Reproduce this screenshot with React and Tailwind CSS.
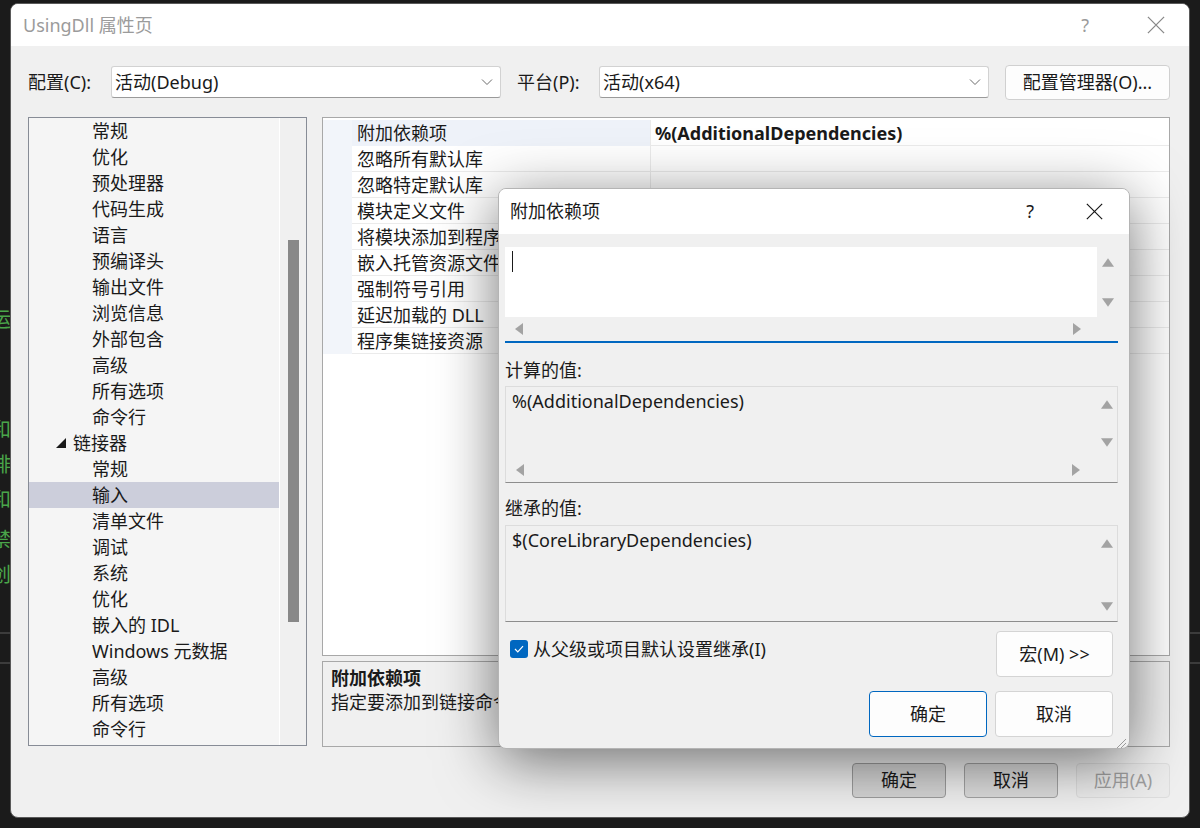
import React from "react";

// tree on the left side of the property page
const TREE = [
  { label: "常规" },
  { label: "优化" },
  { label: "预处理器" },
  { label: "代码生成" },
  { label: "语言" },
  { label: "预编译头" },
  { label: "输出文件" },
  { label: "浏览信息" },
  { label: "外部包含" },
  { label: "高级" },
  { label: "所有选项" },
  { label: "命令行" },
  { label: "链接器", group: true },
  { label: "常规" },
  { label: "输入", selected: true },
  { label: "清单文件" },
  { label: "调试" },
  { label: "系统" },
  { label: "优化" },
  { label: "嵌入的 IDL" },
  { label: "Windows 元数据" },
  { label: "高级" },
  { label: "所有选项" },
  { label: "命令行" },
];

const PROPS = [
  "附加依赖项",
  "忽略所有默认库",
  "忽略特定默认库",
  "模块定义文件",
  "将模块添加到程序集",
  "嵌入托管资源文件",
  "强制符号引用",
  "延迟加载的 DLL",
  "程序集链接资源",
];

// bits of the code editor peeking out behind the window
const BACKDROP = [
  { ch: "“", top: 266 },
  { ch: "运", top: 308 },
  { ch: "和", top: 418 },
  { ch: "排", top: 453 },
  { ch: "和", top: 488 },
  { ch: "禁", top: 528 },
  { ch: "创", top: 563 },
  { ch: "/", top: 603 },
];

const Arrow = ({ dir }) => {
  const pts = {
    up: "0,8 5.5,0 11,8",
    down: "0,0 11,0 5.5,8",
    left: "8,0 8,12 0,6",
    right: "0,0 0,12 8,6",
  }[dir];
  const vertical = dir === "up" || dir === "down";
  return (
    <svg
      width={vertical ? 12 : 8}
      height={vertical ? 9 : 12}
      viewBox={vertical ? "0 0 11 8" : "0 0 8 12"}
    >
      <polygon points={pts} fill="#a3a3a3" />
    </svg>
  );
};

const Chevron = () => (
  <svg width="12" height="8" viewBox="0 0 12 8">
    <path d="M1 1.5 L6 6.5 L11 1.5" fill="none" stroke="#6b6b6b" strokeWidth="1" />
  </svg>
);

const Combo = ({ value, width }) => (
  <div
    className={`h-[32px] ${width} bg-white border border-[#d2d2d2] border-b-[#9a9a9a] rounded-[3px] flex items-center justify-between pl-[3px] pr-[7px]`}
  >
    <span className="text-[18px] leading-[26px] text-[#1a1a1a]">{value}</span>
    <Chevron />
  </div>
);

const CloseIcon = ({ color, size }) => (
  <svg width={size} height={size} viewBox="0 0 20 20">
    <path d="M1 1 L19 19 M19 1 L1 19" stroke={color} strokeWidth="1.4" />
  </svg>
);

const ValueBox = ({ text, bg, hscroll, height, arrowsPad }) => (
  <div className={`flex flex-col border border-[#dcdcdc] border-b-[#8d8d8d] ${bg}`}>
    <div className={`flex ${height}`}>
      <div className="flex-1 pl-[6px] pt-[1px] text-[18px] leading-[26px] text-[#1a1a1a]">
        {text}
      </div>
      <div
        className={`w-[21px] bg-[#f0f0f0] flex flex-col items-center justify-between ${arrowsPad}`}
      >
        <Arrow dir="up" />
        <Arrow dir="down" />
      </div>
    </div>
    {hscroll && (
      <div className="h-[24px] flex bg-[#f0f0f0]">
        <div className="flex-1 flex items-center justify-between pl-[10px] pr-[16px]">
          <Arrow dir="left" />
          <Arrow dir="right" />
        </div>
        <div className="w-[21px]" />
      </div>
    )}
  </div>
);

const App = () => {
  return (
    <div className="relative w-[1200px] h-[828px] bg-[#1b1b1b] overflow-hidden font-['Noto_Sans','Noto_Sans_CJK_SC',sans-serif]">
      {/* editor behind */}
      {BACKDROP.map((b, i) => (
        <div
          key={i}
          className="absolute left-[-9px] text-[20px] leading-[24px] text-[#4aa64a]"
          style={{ top: b.top }}
        >
          {b.ch}
        </div>
      ))}
      <div className="absolute left-0 top-[632px] w-[12px] h-[2px] bg-[#3c3c3c]" />
      <div className="absolute left-0 top-[662px] w-[12px] h-[2px] bg-[#3c3c3c]" />
      <div className="absolute right-0 top-[632px] w-[12px] h-[2px] bg-[#3c3c3c]" />
      <div className="absolute right-0 top-[662px] w-[12px] h-[2px] bg-[#3c3c3c]" />

      {/* property page window */}
      <div className="absolute left-[10px] top-[3px] w-[1180px] h-[815px] rounded-[8px] bg-[#f0f0f0] border border-[#5a5a5a] flex flex-col overflow-hidden">
        <div className="h-[42px] shrink-0 bg-white flex items-center justify-between pl-[12px] pr-[24px]">
          <span className="text-[18px] text-[#9b9b9b]">UsingDll 属性页</span>
          <div className="flex items-center gap-[58px]">
            <span className="text-[18px] text-[#9b9b9b]">?</span>
            <CloseIcon color="#8a8a8a" size={18} />
          </div>
        </div>

        <div className="flex-1 flex flex-col pl-[17px] pr-[19px]">
          {/* configuration row */}
          <div className="flex items-center mt-[18px] h-[36px]">
            <span className="w-[83px] text-[18px] text-[#1a1a1a]">配置(C):</span>
            <Combo value="活动(Debug)" width="w-[390px]" />
            <span className="w-[82px] ml-[16px] text-[18px] text-[#1a1a1a]">平台(P):</span>
            <Combo value="活动(x64)" width="w-[390px]" />
            <div className="ml-[16px] w-[165px] h-[35px] bg-[#fdfdfd] border border-[#d0d0d0] rounded-[4px] flex items-center justify-center text-[18px] text-[#1a1a1a]">
              配置管理器(O)...
            </div>
          </div>

          <div className="flex mt-[17px] gap-[15px]">
            {/* tree */}
            <div className="w-[279px] h-[629px] border border-[#878c96] bg-[#f5f5f5] flex">
              <div className="flex-1 flex flex-col border-r border-white">
                {TREE.map((t, i) => (
                  <div
                    key={i}
                    className={`h-[26px] shrink-0 flex items-center text-[18px] leading-[26px] text-[#1a1a1a] ${
                      t.selected ? "bg-[#cccedb]" : ""
                    } ${t.group ? "pl-[27px]" : "pl-[63px]"}`}
                  >
                    {t.group && (
                      <svg width="10" height="10" viewBox="0 0 10 10" className="mr-[7px]">
                        <polygon points="10,0 10,10 0,10" fill="#1a1a1a" />
                      </svg>
                    )}
                    {t.label}
                  </div>
                ))}
              </div>
              <div className="w-[26px] bg-[#f0f0f0] flex justify-center">
                <div className="w-[11px] h-[382px] mt-[122px] bg-[#888888]" />
              </div>
            </div>

            {/* property grid + description */}
            <div className="flex-1 flex flex-col gap-[5px]">
              <div className="h-[539px] border border-[#a8a8a8] bg-white pt-[2px]">
                {PROPS.map((p, i) => (
                  <div key={i} className="h-[26px] flex">
                    <div className="w-[29px] bg-[#f2f5fa]" />
                    <div
                      className={`w-[298px] pl-[5px] flex items-center text-[18px] leading-[26px] text-[#1a1a1a] border-b ${
                        i === 0 ? "bg-[#eef2f9] border-[#eef2f9]" : "border-[#ebebeb]"
                      }`}
                    >
                      {p}
                    </div>
                    <div className="flex-1 pl-[4px] flex items-center border-l border-b border-[#ebebeb] text-[18px] leading-[26px] text-[#1a1a1a] font-bold">
                      {i === 0 ? "%(AdditionalDependencies)" : ""}
                    </div>
                  </div>
                ))}
              </div>
              <div className="h-[86px] border border-[#a8a8a8] bg-[#f0f0f0] pl-[8px] pt-[4px]">
                <div className="text-[18px] leading-[24px] font-bold text-[#1a1a1a]">附加依赖项</div>
                <div className="text-[18px] leading-[24px] text-[#1a1a1a]">
                  指定要添加到链接命令行的附加项。[例如 kernel32.lib]
                </div>
              </div>
            </div>
          </div>

          {/* bottom buttons */}
          <div className="flex justify-end gap-[18px] mt-[16px]">
            <div className="w-[94px] h-[35px] rounded-[4px] border border-[#9d9d9d] bg-[#d6d6d6] flex items-center justify-center text-[18px] text-[#1a1a1a]">
              确定
            </div>
            <div className="w-[94px] h-[35px] rounded-[4px] border border-[#a3a3a3] bg-[#dcdcdc] flex items-center justify-center text-[18px] text-[#1a1a1a]">
              取消
            </div>
            <div className="w-[94px] h-[35px] rounded-[4px] border border-[#dedede] bg-[#ececec] flex items-center justify-center text-[18px] text-[#a0a0a0]">
              应用(A)
            </div>
          </div>
        </div>

        {/* modal: 附加依赖项 */}
        <div className="absolute left-[487px] top-[184px] w-[632px] h-[561px] rounded-[8px] bg-[#f0f0f0] border border-[#b4b4b4] shadow-[0_12px_60px_rgba(0,0,0,0.55)] flex flex-col overflow-hidden">
          <div className="h-[45px] shrink-0 bg-white flex items-center justify-between pl-[11px] pr-[26px]">
            <span className="text-[18px] text-[#1a1a1a]">附加依赖项</span>
            <div className="flex items-center gap-[52px]">
              <span className="text-[18px] text-[#1a1a1a]">?</span>
              <CloseIcon color="#1a1a1a" size={17} />
            </div>
          </div>

          <div className="flex-1 flex flex-col pl-[6px] pr-[11px] pt-[13px]">
            {/* edit box */}
            <div className="flex flex-col border-b-2 border-[#0067c0]">
              <div className="flex h-[70px]">
                <div className="flex-1 bg-white pl-[7px] pt-[4px]">
                  <div className="w-[1px] h-[21px] bg-[#1a1a1a]" />
                </div>
                <div className="w-[21px] bg-[#f0f0f0] flex flex-col items-center justify-between pt-[11px] pb-[10px]">
                  <Arrow dir="up" />
                  <Arrow dir="down" />
                </div>
              </div>
              <div className="h-[24px] flex bg-[#f0f0f0]">
                <div className="flex-1 flex items-center justify-between pl-[10px] pr-[16px]">
                  <Arrow dir="left" />
                  <Arrow dir="right" />
                </div>
                <div className="w-[21px]" />
              </div>
            </div>

            <div className="mt-[14px] mb-[3px] text-[18px] leading-[26px] text-[#1a1a1a]">计算的值:</div>
            <ValueBox
              text="%(AdditionalDependencies)"
              bg="bg-[#f0f0f0]"
              hscroll
              height="h-[71px]"
              arrowsPad="pt-[13px] pb-[11px]"
            />

            <div className="mt-[12px] mb-[4px] text-[18px] leading-[26px] text-[#1a1a1a]">继承的值:</div>
            <ValueBox
              text="$(CoreLibraryDependencies)"
              bg="bg-[#f0f0f0]"
              height="h-[95px]"
              arrowsPad="pt-[13px] pb-[10px]"
            />

            <div className="flex items-start justify-between mt-[9px] pr-[5px]">
              <div className="flex items-center mt-[7px] ml-[5px] gap-[5px]">
                <div className="w-[18px] h-[18px] rounded-[3px] bg-[#0067c0] flex items-center justify-center">
                  <svg width="10" height="8" viewBox="0 0 10 8">
                    <path d="M1 4 L3.8 6.8 L9 1.2" fill="none" stroke="white" strokeWidth="1.2" />
                  </svg>
                </div>
                <span className="text-[18px] leading-[22px] text-[#1a1a1a]">从父级或项目默认设置继承(I)</span>
              </div>
              <div className="w-[117px] h-[46px] bg-[#fdfdfd] border border-[#d4d4d4] rounded-[4px] flex items-center justify-center text-[18px] text-[#1a1a1a]">
                宏(M) &gt;&gt;
              </div>
            </div>

            <div className="flex justify-end gap-[8px] mt-[14px] pr-[5px]">
              <div className="w-[118px] h-[46px] bg-[#fdfdfd] border border-[#0067c0] rounded-[4px] flex items-center justify-center text-[18px] text-[#1a1a1a]">
                确定
              </div>
              <div className="w-[118px] h-[46px] bg-[#fdfdfd] border border-[#d4d4d4] rounded-[4px] flex items-center justify-center text-[18px] text-[#1a1a1a]">
                取消
              </div>
            </div>

            <div className="flex justify-end mt-auto mr-[-9px] mb-[2px]">
              <svg width="12" height="12" viewBox="0 0 12 12">
                <path d="M11 2 L2 11 M11 6 L6 11" stroke="#9a9a9a" strokeWidth="1" />
              </svg>
            </div>
          </div>
        </div>
      </div>
    </div>
  );
};

export default App;
